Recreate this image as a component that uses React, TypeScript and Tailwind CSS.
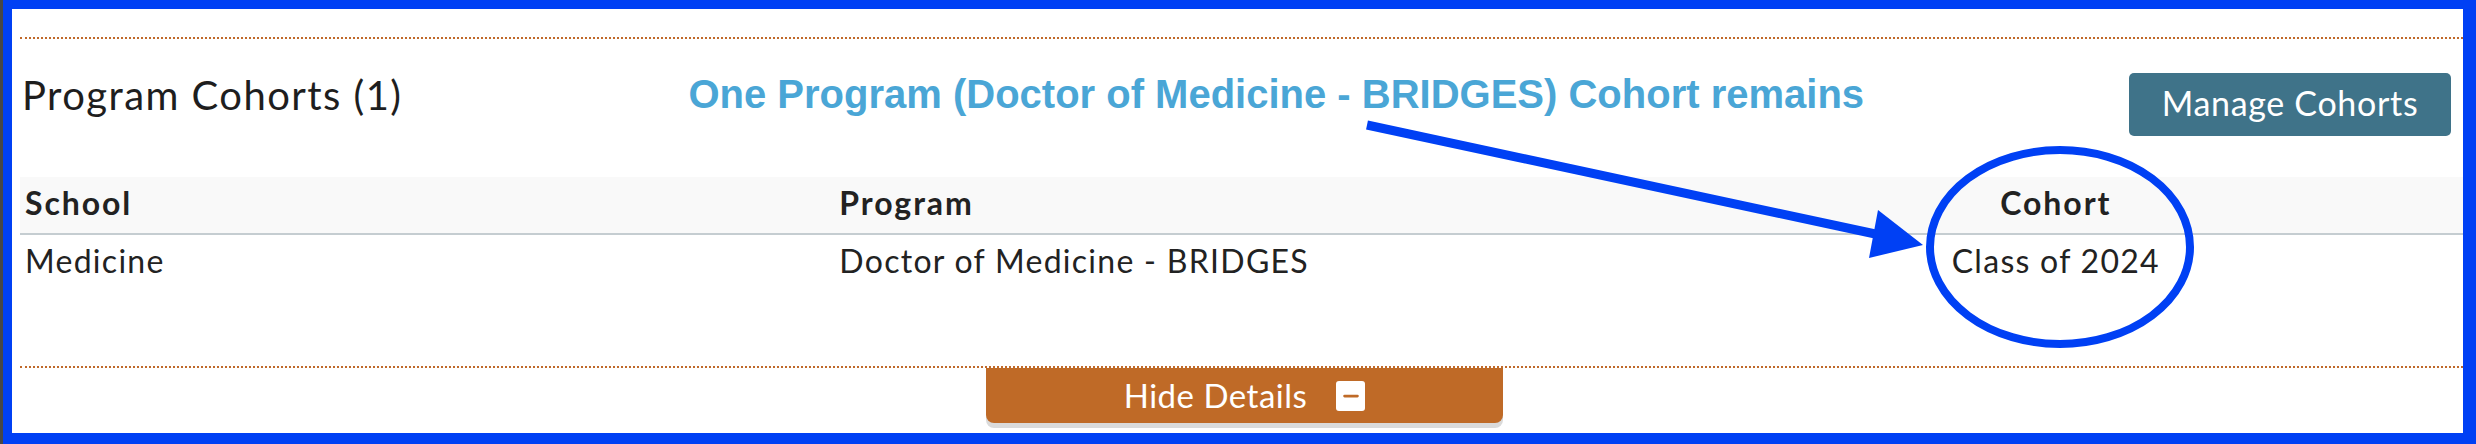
import { Minus } from 'lucide-react';

const sans = "font-['Lato','Noto_Sans',sans-serif]";

function HeaderCell({ label, center }: { label: string; center?: boolean }) {
  return (
    <div
      className={`px-[5px] pb-[4px] text-[32px] font-bold leading-[52px] tracking-[0.06em] text-[#222] ${center ? 'text-center' : ''}`}
    >
      {label}
    </div>
  );
}

function Cell({ value, center }: { value: string; center?: boolean }) {
  return (
    <div className={`px-[5px] text-[32px] leading-[52px] tracking-[0.04em] text-[#222] ${center ? 'text-center' : ''}`}>
      {value}
    </div>
  );
}

function Annotation() {
  return (
    <svg className="pointer-events-none absolute inset-0" width="2476" height="444" viewBox="0 0 2476 444">
      <line x1="1367" y1="125" x2="1880" y2="235" stroke="#0040f4" strokeWidth="9" />
      <polygon points="1923,245 1878,210 1869,258" fill="#0040f4" />
      <ellipse cx="2060" cy="247" rx="130" ry="97" fill="none" stroke="#0040f4" strokeWidth="8" />
    </svg>
  );
}

export default function App() {
  return (
    <div className={`relative flex h-[444px] w-[2476px] bg-[#474747] ${sans}`}>
      <div className="ml-[3px] flex flex-1 flex-col border-t-[9px] border-r-[13px] border-b-[11px] border-l-[9px] border-[#0040f4] bg-white pl-[8px]">
        <div className="mt-[28px] border-t-2 border-dotted border-[#c0692a]" />

        <div className="mt-[34px] flex items-start">
          <h2 className="ml-[2px] text-[40px] leading-[44px] tracking-[0.036em] text-[#1e1e1e]">Program Cohorts (1)</h2>
          <p className="mt-[1px] ml-[286px] font-['Liberation_Sans',Arial,sans-serif] text-[40px] font-bold leading-[40px] text-[#4aa6d6]">
            One Program (Doctor of Medicine - BRIDGES) Cohort remains
          </p>
          <button
            type="button"
            className="mr-[12px] ml-auto h-[63px] w-[322px] rounded-[5px] bg-[#3f7389] pb-[4px] text-[34px] leading-none tracking-[0.02em] text-white"
          >
            Manage Cohorts
          </button>
        </div>

        <div className="mt-[41px] grid grid-cols-3 border-b-2 border-[#c5cdd1] bg-[#f9f9f9]">
          <HeaderCell label="School" />
          <HeaderCell label="Program" />
          <HeaderCell label="Cohort" center />
        </div>
        <div className="grid grid-cols-3">
          <Cell value="Medicine" />
          <Cell value="Doctor of Medicine - BRIDGES" />
          <Cell value="Class of 2024" center />
        </div>

        <div className="mt-[79px] border-t-2 border-dotted border-[#c0692a]" />
        <div className="flex justify-center pl-[6px]">
          <button
            type="button"
            className="flex h-[55px] w-[517px] items-center justify-center gap-[29px] rounded-b-[8px] bg-[#bf6a27] text-[33px] tracking-[0.015em] text-white shadow-[0_5px_0_#dadada]"
          >
            <span className="leading-none">Hide Details</span>
            <span className="flex h-[30px] w-[29px] items-center justify-center rounded-[3px] bg-white">
              <Minus className="h-[22px] w-[22px] text-[#bf6a27]" strokeWidth={3} />
            </span>
          </button>
        </div>
      </div>
      <Annotation />
    </div>
  );
}
